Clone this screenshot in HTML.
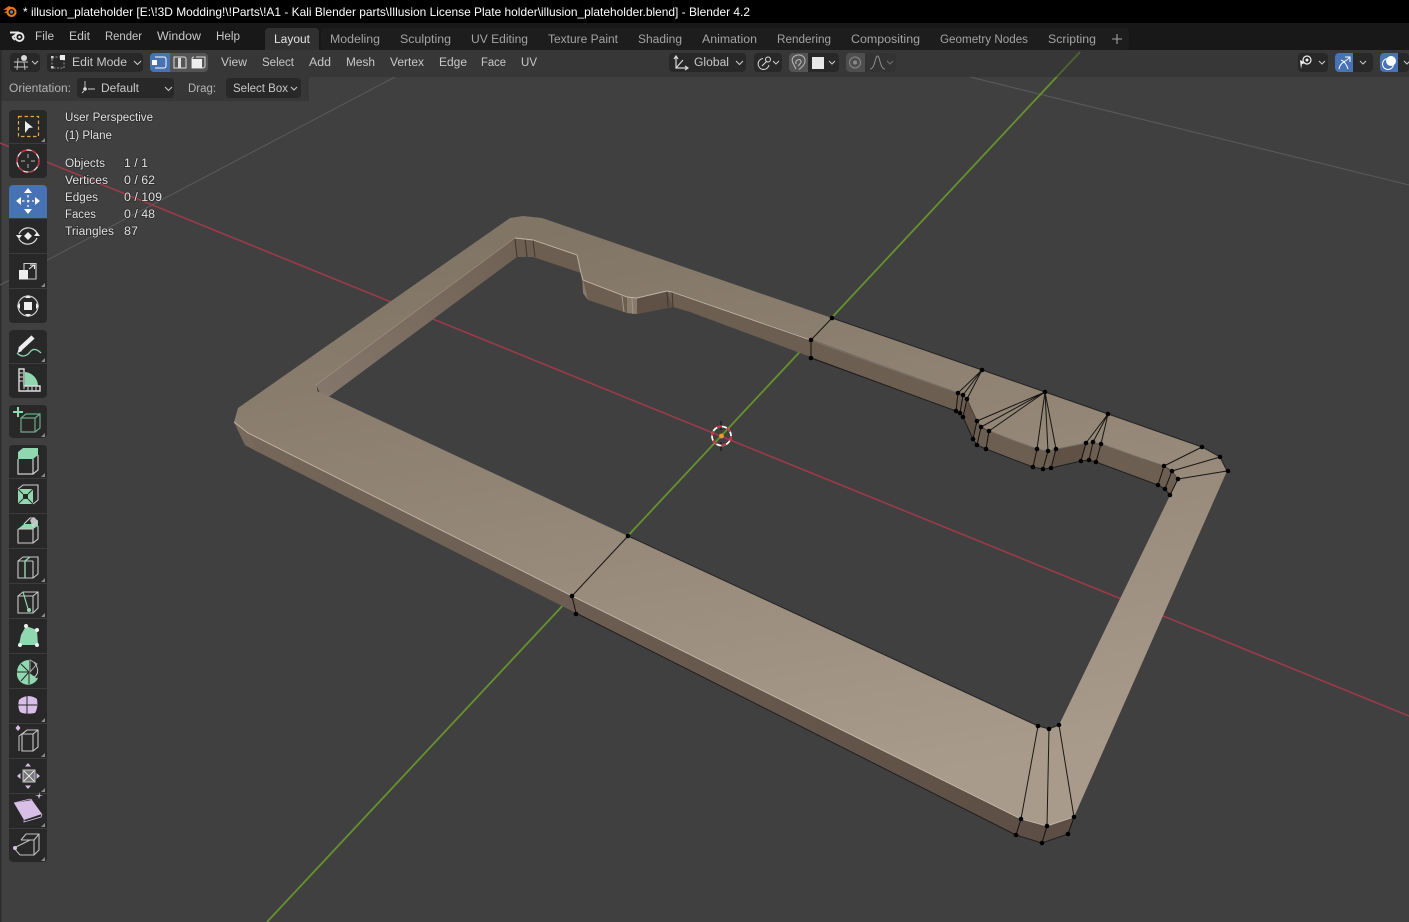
<!DOCTYPE html>
<html><head><meta charset="utf-8"><title>illusion_plateholder - Blender 4.2</title>
<style>
html,body{margin:0;padding:0;background:#404040;width:1409px;height:922px;overflow:hidden}
svg{display:block}
text{font-family:"Liberation Sans",sans-serif;font-size:11.5px;fill:#c8c8c8}
.t{fill:#a3a3a3}
.o{fill:#e2e2e2;paint-order:stroke;stroke:#1c1c1c;stroke-width:1.6px;stroke-opacity:.55}
.b{fill:#282828}
.ch{fill:none;stroke:#c8c8c8;stroke-width:1.1}
.w{fill:none;stroke:#d8d8d8;stroke-width:1.2}
.m{fill:#8fd8b0}
.p{fill:#d8bfe8}
.e{stroke:#0a0a0a;stroke-width:1;fill:none;opacity:.9}
.sep{fill:#3c3c3c}
.tri{fill:#8a8a8a}
</style></head><body>
<svg width="1409" height="922" viewBox="0 0 1409 922" xmlns="http://www.w3.org/2000/svg">
<defs>
<linearGradient id="top" gradientUnits="userSpaceOnUse" x1="620" y1="220" x2="720" y2="810"><stop offset="0" stop-color="#817566"/><stop offset="1" stop-color="#a99b8b"/></linearGradient>
<linearGradient id="wall" gradientUnits="userSpaceOnUse" x1="240" y1="440" x2="1060" y2="840"><stop offset="0" stop-color="#75675a"/><stop offset="1" stop-color="#5c4e44"/></linearGradient>
<linearGradient id="lw" gradientUnits="userSpaceOnUse" x1="320" y1="390" x2="515" y2="245"><stop offset="0" stop-color="#84766a"/><stop offset="1" stop-color="#6f6154"/></linearGradient>
</defs>
<rect width="1409" height="922" fill="#404040"/>
<rect x="0" y="50" width="1.5" height="872" fill="#2c2c2c"/>

<!-- grid and axes -->
<g fill="none">
<line x1="0" y1="285" x2="395" y2="77" stroke="#5a5a5a" stroke-width="1"/>
<line x1="970" y1="77" x2="1409" y2="185" stroke="#5a5a5a" stroke-width="1"/>
<line x1="0" y1="143" x2="1409" y2="716" stroke="#a03a4a" stroke-width="1.500"/>
<line x1="267" y1="922" x2="1080" y2="52" stroke="#66922e" stroke-width="1.800"/>
</g>

<!-- inner walls -->
<path fill="#6c5e51" d="M515,238 L533,240 L577,255 L581,273 L583,280 L627,297 L637,298 L667,291 L672,292 L958,393 L963,395 L967,399 L977,421 L981,427 L989,431 L1037,449 L1048,451 L1056,449 L1086,443 L1093,442 L1101,444 L1164,466 L1172,471 L1178,479 L1170,495 L1165,489 L1158,485 L1096,462 L1089,460 L1081,461 L1051,468 L1043,469 L1033,467 L986,449 L977,445 L973,439 L963,417 L960,413 L956,411 L690,312 L673,307 L637,314 L627,313 L588,300 L583,293 L581,273 L533,257 L517,257 Z"/>
<path fill="url(#lw)" d="M316,385 L515,238 L517,257 L327,398 L320,393 Z"/>
<path fill="#5f5146" d="M637,298 L667,291 L673,307 L637,314 Z M1056,449 L1086,443 L1081,461 L1051,468 Z M967,399 L977,421 L973,439 L963,417 Z"/>
<path fill="#8a7c6d" d="M627,297 L637,298 L637,314 L627,313 Z M583,280 L588,300 L583,293 Z"/>
<path stroke="#3e3630" stroke-width="1" fill="none" d="M515,239 L517,257 M525,238 L527,257 M533,240 L535,257 M667,291 L668,307 M672,291 L673,307"/>
<path stroke="#a3968a" stroke-width="1" fill="none" d="M622,296 L624,312 M632,298 L633,314"/>
<!-- outer walls -->
<path fill="url(#wall)" d="M234,422 L248,433 L572,596 L1021,819 L1047,826 L1074,817 L1068,834 L1042,843 L1016,835 L576,613 L258,452 L245,445 Z"/>
<path fill="#77695c" d="M234,422 L248,433 L258,452 L245,445 Z"/>
<!-- top face -->
<path fill="url(#top)" fill-rule="evenodd" d="M238,408 L510,218 L523,216 L542,218 L832,318 L982,370 L1045,392 L1108,414 L1202,447 L1220,457 L1227,471 L1074,817 L1047,826 L1021,819 L572,596 L248,433 L234,422 Z
M316,385 L515,238 L533,240 L577,255 L581,273 L583,280 L627,297 L637,298 L667,291 L672,292 L810,340 L958,393 L963,395 L967,399 L977,421 L981,427 L989,431 L1037,449 L1048,451 L1056,449 L1086,443 L1093,442 L1101,444 L1164,466 L1172,471 L1178,479 L1059,725 L1049,729 L1038,726 L628,536 L330,397 L317,391 Z"/>
<!-- highlights -->
<g fill="none" stroke="#d9cfc0" stroke-width=".9" opacity=".75">
<path d="M234,422 L248,433 L572,596 L1021,819 L1047,826 L1074,817"/>
<path d="M515,238 L533,240 L577,255 L581,273 L583,280 L627,297 L637,298 L667,291 L672,292 L810,340 L958,393"/>
<path d="M989,431 L1037,449 L1048,451 L1056,449 L1086,443 L1093,442 L1101,444 L1164,466"/>
</g>
<path d="M317,391 L316,385 L515,238" fill="none" stroke="#d9cfc0" stroke-width=".7" opacity=".35"/>
<g fill="none" stroke="#151515" stroke-width="1" opacity=".8">
<path d="M576,613 L1016,835 L1042,843 L1068,834"/>
<path d="M628,536 L1038,726 L1049,729 L1059,725"/>
<path d="M832,318 L982,370 L1045,392 L1108,414 L1202,447 L1220,457 L1227,471"/>
<path d="M811,358 L956,411 L960,413 L963,417 L973,439 L977,445 L986,449 L1033,467 L1043,469 L1051,468 L1081,461 L1089,460 L1096,462 L1158,485 L1165,489 L1170,495"/>
<path d="M811,340 L958,393 L963,395 L967,399 L977,421 L981,427 L989,431 L1037,449 L1048,451 L1056,449 L1086,443 L1093,442 L1101,444 L1164,466 L1172,471 L1178,479" opacity=".55"/>
</g>
<!-- edges -->
<g class="e">
<path d="M572,596 L628,536 M572,596 L576,613 M811,340 L832,318 M811,340 L811,358"/>
<path d="M982,370 L958,393 M982,370 L963,395 M982,370 L967,399"/>
<path d="M1045,392 L977,421 M1045,392 L981,427 M1045,392 L989,431 M1045,392 L1037,449 M1045,392 L1048,451 M1045,392 L1056,449"/>
<path d="M1108,414 L1086,443 M1108,414 L1093,442 M1108,414 L1101,444"/>
<path d="M1202,447 L1164,466 M1220,457 L1172,471 M1227,471 L1178,479"/>
<path d="M958,393 L956,411 M963,395 L960,413 M967,399 L963,417 M977,421 L973,439 M981,427 L977,445 M989,431 L986,449 M1037,449 L1033,467 M1048,451 L1043,469 M1056,449 L1051,468 M1086,443 L1081,461 M1093,442 L1089,460 M1101,444 L1096,462 M1164,466 L1158,485 M1172,471 L1165,489 M1178,479 L1170,495"/>
<path d="M1038,726 L1021,819 M1049,729 L1047,826 M1059,725 L1074,817 M1021,819 L1016,835 M1047,826 L1042,843 M1074,817 L1068,834"/>
</g>
<!-- vertices -->
<g fill="#000">
<circle cx="628" cy="536" r="2.300"/><circle cx="572" cy="596" r="2.300"/><circle cx="576" cy="614" r="2.300"/><circle cx="832" cy="318" r="2.300"/><circle cx="811" cy="340" r="2.300"/><circle cx="811" cy="358" r="2.300"/>
<circle cx="982" cy="370" r="2.300"/><circle cx="1045" cy="392" r="2.300"/><circle cx="1108" cy="414" r="2.300"/><circle cx="1202" cy="447" r="2.300"/><circle cx="1220" cy="457" r="2.300"/><circle cx="1228" cy="471" r="2.300"/>
<circle cx="958" cy="393" r="2.300"/><circle cx="963" cy="395" r="2.300"/><circle cx="967" cy="399" r="2.300"/><circle cx="977" cy="421" r="2.300"/><circle cx="981" cy="427" r="2.300"/><circle cx="989" cy="431" r="2.300"/><circle cx="1037" cy="449" r="2.300"/><circle cx="1048" cy="451" r="2.300"/><circle cx="1056" cy="449" r="2.300"/><circle cx="1086" cy="443" r="2.300"/><circle cx="1093" cy="442" r="2.300"/><circle cx="1101" cy="444" r="2.300"/><circle cx="1164" cy="466" r="2.300"/><circle cx="1172" cy="471" r="2.300"/><circle cx="1178" cy="479" r="2.300"/>
<circle cx="956" cy="411" r="2.300"/><circle cx="960" cy="413" r="2.300"/><circle cx="963" cy="417" r="2.300"/><circle cx="973" cy="439" r="2.300"/><circle cx="977" cy="445" r="2.300"/><circle cx="986" cy="449" r="2.300"/><circle cx="1033" cy="467" r="2.300"/><circle cx="1043" cy="469" r="2.300"/><circle cx="1051" cy="468" r="2.300"/><circle cx="1081" cy="461" r="2.300"/><circle cx="1089" cy="460" r="2.300"/><circle cx="1096" cy="462" r="2.300"/><circle cx="1158" cy="485" r="2.300"/><circle cx="1165" cy="489" r="2.300"/><circle cx="1170" cy="495" r="2.300"/>
<circle cx="1038" cy="726" r="2.300"/><circle cx="1049" cy="729" r="2.300"/><circle cx="1059" cy="725" r="2.300"/><circle cx="1021" cy="819" r="2.300"/><circle cx="1047" cy="826" r="2.300"/><circle cx="1074" cy="817" r="2.300"/><circle cx="1016" cy="835" r="2.300"/><circle cx="1042" cy="843" r="2.300"/><circle cx="1068" cy="834" r="2.300"/>
</g>
<!-- 3D cursor -->
<g fill="none">
<path d="M721,421 V430 M721,442 V451" stroke="#111" stroke-width="1"/>
<circle cx="721.500" cy="436" r="9.500" stroke="#fff" stroke-width="1.700"/>
<circle cx="721.500" cy="436" r="9.500" stroke="#d0303c" stroke-width="1.800" stroke-dasharray="5 5"/>
<circle cx="721.500" cy="436" r="2.400" fill="#f09a20"/>
</g>

<!-- header overlays -->
<rect x="0" y="50" width="1409" height="27" fill="#2c2c2c" opacity=".42"/>
<rect x="0" y="77" width="309" height="24" fill="#2c2c2c" opacity=".42"/>
<!-- title bar -->
<rect width="1409" height="23" fill="#000"/>
<rect y="23" width="1409" height="27" fill="#181818"/>
<g>
<circle cx="11.500" cy="12" r="4" fill="none" stroke="#ea7600" stroke-width="2.200"/>
<path d="M3,10 L10,9.500 L11,7 L9,6 Z M4,13 L8,10 L8,13 Z" fill="#ea7600"/><circle cx="11.500" cy="12" r="1.700" fill="#5a7fb0"/>
</g>
<text x="23" y="16" textLength="727" lengthAdjust="spacingAndGlyphs" style="fill:#fff;font-size:12px">* illusion_plateholder [E:\!3D Modding!\!Parts\!A1 - Kali Blender parts\Illusion License Plate holder\illusion_plateholder.blend] - Blender 4.2</text>
<!-- blender logo -->
<g fill="none" stroke="#e6e6e6">
<circle cx="19.500" cy="37" r="4" stroke-width="1.900"/>
<path d="M10,32.500 H19 M12,37.500 L18,33 M12.500,37.500 L15,40" stroke-width="1.900"/>
</g>
<circle cx="19.500" cy="37" r="1.300" fill="#e6e6e6"/>
<text x="35" y="40" textLength="19" lengthAdjust="spacingAndGlyphs">File</text>
<text x="69" y="40" textLength="21" lengthAdjust="spacingAndGlyphs">Edit</text>
<text x="105" y="40" textLength="37" lengthAdjust="spacingAndGlyphs">Render</text>
<text x="157" y="40" textLength="44" lengthAdjust="spacingAndGlyphs">Window</text>
<text x="216" y="40" textLength="24" lengthAdjust="spacingAndGlyphs">Help</text>
<!-- tabs -->
<rect x="321" y="28" width="808" height="22" rx="4" fill="#1d1d1d"/>
<path d="M265,50 V32 a4,4 0 0 1 4,-4 H315 a4,4 0 0 1 4,4 V50 Z" fill="#303030"/>
<text x="274" y="43" textLength="36" lengthAdjust="spacingAndGlyphs" style="fill:#e2e2e2">Layout</text>
<text class="t" x="330" y="43" textLength="50" lengthAdjust="spacingAndGlyphs">Modeling</text>
<text class="t" x="400" y="43" textLength="51" lengthAdjust="spacingAndGlyphs">Sculpting</text>
<text class="t" x="471" y="43" textLength="57" lengthAdjust="spacingAndGlyphs">UV Editing</text>
<text class="t" x="548" y="43" textLength="70" lengthAdjust="spacingAndGlyphs">Texture Paint</text>
<text class="t" x="638" y="43" textLength="44" lengthAdjust="spacingAndGlyphs">Shading</text>
<text class="t" x="702" y="43" textLength="55" lengthAdjust="spacingAndGlyphs">Animation</text>
<text class="t" x="777" y="43" textLength="54" lengthAdjust="spacingAndGlyphs">Rendering</text>
<text class="t" x="851" y="43" textLength="69" lengthAdjust="spacingAndGlyphs">Compositing</text>
<text class="t" x="940" y="43" textLength="88" lengthAdjust="spacingAndGlyphs">Geometry Nodes</text>
<text class="t" x="1048" y="43" textLength="48" lengthAdjust="spacingAndGlyphs">Scripting</text>
<path d="M1117,34 V44 M1112,39 H1122" stroke="#a3a3a3" stroke-width="1.100"/>

<!-- header row 1 -->
<rect class="b" x="10" y="53" width="30" height="19" rx="4"/>
<path d="M14,62 H28 M14,67 H28 M18,58 L17,70 M24,62 L25,70" stroke="#c8c8c8" stroke-width=".9" fill="none"/>
<circle cx="24" cy="58" r="3" fill="#d8d8d8"/>
<path d="M32,61 l3,3 l3,-3" class="ch"/>
<rect class="b" x="47" y="53" width="96" height="19" rx="4"/>
<path d="M52,57 H64 V68 H52 Z" fill="none" stroke="#b0b0b0" stroke-width=".8" stroke-dasharray="2 1.500"/>
<rect x="60" y="55" width="5" height="5" fill="#ededed"/><rect x="51" y="56" width="2.500" height="2.500" fill="#ccc"/><rect x="51" y="66" width="2.500" height="2.500" fill="#ccc"/>
<text x="72" y="66" textLength="55" lengthAdjust="spacingAndGlyphs">Edit Mode</text>
<path d="M134,61 l3.500,3.500 l3.500,-3.500" class="ch"/>
<rect x="150" y="53" width="19" height="19" rx="4" fill="#4772b3"/>
<rect x="165" y="53" width="5" height="19" fill="#4772b3"/>
<rect x="170" y="53" width="19" height="19" fill="#545454"/>
<path d="M189,53 H204 a4,4 0 0 1 4,4 V68 a4,4 0 0 1 -4,4 H189 Z" fill="#545454"/>
<path d="M155,57 H164 a2,2 0 0 1 2,2 V66 a2,2 0 0 1 -2,2 H155" fill="none" stroke="#fff" stroke-width="1"/>
<rect x="152" y="60" width="5" height="5" fill="#fff"/>
<path d="M174,57 H184 a2,2 0 0 1 2,2 V68 H174 Z" fill="none" stroke="#ddd" stroke-width="1"/><rect x="178" y="58" width="3" height="10" fill="#ddd"/>
<path d="M196,57 H205 V66 a2,2 0 0 1 -2,2 H192 V59 a2,2 0 0 1 2,-2" fill="none" stroke="#ddd" stroke-width="1"/><rect x="192" y="59" width="10" height="9" fill="#eee"/>
<text x="221" y="66" textLength="26" lengthAdjust="spacingAndGlyphs">View</text>
<text x="262" y="66" textLength="32" lengthAdjust="spacingAndGlyphs">Select</text>
<text x="309" y="66" textLength="22" lengthAdjust="spacingAndGlyphs">Add</text>
<text x="346" y="66" textLength="29" lengthAdjust="spacingAndGlyphs">Mesh</text>
<text x="390" y="66" textLength="34" lengthAdjust="spacingAndGlyphs">Vertex</text>
<text x="439" y="66" textLength="28" lengthAdjust="spacingAndGlyphs">Edge</text>
<text x="481" y="66" textLength="25" lengthAdjust="spacingAndGlyphs">Face</text>
<text x="521" y="66" textLength="16" lengthAdjust="spacingAndGlyphs">UV</text>

<rect class="b" x="669" y="53" width="77" height="19" rx="4"/>
<path d="M676,57 V68 H687 M676,68 L683,60" class="w" stroke-width="1"/><path d="M674,59 l2,-3 l2,3 M685,66 l3,2 l-3,2" class="w" stroke-width=".9"/>
<text x="694" y="66" textLength="35" lengthAdjust="spacingAndGlyphs">Global</text>
<path d="M736,61 l3.500,3.500 l3.500,-3.500" class="ch"/>
<rect class="b" x="754" y="53" width="28" height="19" rx="4"/>
<path d="M763,58.500 A5.500,5.500 0 1 0 769,65 M767,61 L762,66" fill="none" stroke="#ddd" stroke-width="1"/><circle cx="768" cy="59.500" r="2.500" fill="none" stroke="#ddd"/>
<path d="M773,61 l3,3 l3,-3" class="ch"/>
<rect class="b" x="789" y="53" width="50" height="19" rx="4"/>
<path d="M789,57 a4,4 0 0 1 4,-4 H808 V72 H793 a4,4 0 0 1 -4,-4 Z" fill="#545454"/>
<path d="M796,69 L792.500,62 C790,54 804,52 805,60 C805.500,64 802,67 799,69.500 M796,64 C795,60 800,58 801,61 C801.500,62.500 799,65 798,66" fill="none" stroke="#b4b4b4" stroke-width="1.100"/>
<rect x="812" y="57" width="12" height="12" fill="#e8e8e8"/>
<path d="M829,61 l3,3 l3,-3" class="ch"/>
<rect x="846" y="53" width="50" height="19" rx="4" fill="#333"/>
<path d="M846,57 a4,4 0 0 1 4,-4 H865 V72 H850 a4,4 0 0 1 -4,-4 Z" fill="#4e4e4e"/>
<circle cx="855" cy="62.500" r="5.500" fill="none" stroke="#8a8a8a"/><circle cx="855" cy="62.500" r="2" fill="#8a8a8a"/>
<path d="M870,69 C875,69 875,56 877.500,56 C880,56 880,69 885,69" fill="none" stroke="#8e8e8e"/>
<path d="M887,61 l3,3 l3,-3" class="ch" opacity=".4"/>

<rect class="b" x="1298" y="53" width="30" height="19" rx="4"/>
<circle cx="1307" cy="60" r="4" fill="none" stroke="#eee" stroke-width="1.200"/><circle cx="1307" cy="60" r="1.500" fill="#eee"/>
<path d="M1300,60 L1306,63 L1302,64 L1301,69 Z" fill="#eee"/>
<path d="M1319,61 l3,3 l3,-3" class="ch"/>
<rect class="b" x="1335" y="53" width="38" height="19" rx="4"/>
<path d="M1335,57 a4,4 0 0 1 4,-4 H1353 V72 H1339 a4,4 0 0 1 -4,-4 Z" fill="#4772b3"/>
<path d="M1339,69 C1340,62 1346,62 1350,57 M1345,57 H1350 V62 M1341,60 C1344,61 1347,65 1348,69" fill="none" stroke="#fff" stroke-width="1"/>
<path d="M1360,61 l3,3 l3,-3" class="ch"/>
<rect class="b" x="1380" y="53" width="29" height="19" rx="4"/>
<path d="M1380,57 a4,4 0 0 1 4,-4 H1398 V72 H1384 a4,4 0 0 1 -4,-4 Z" fill="#4772b3"/>
<circle cx="1388" cy="64" r="5.500" fill="none" stroke="#fff"/><circle cx="1391" cy="61" r="5" fill="#fff"/>
<path d="M1404,61 l3,3 l3,-3" class="ch"/>

<!-- tool settings -->
<text x="9" y="92" textLength="62" lengthAdjust="spacingAndGlyphs" style="fill:#b4b4b4">Orientation:</text>
<rect class="b" x="77" y="78" width="97" height="20" rx="4"/>
<path d="M85,81 V88 M82,93 l2,-2 M88,89 H95" fill="none" stroke="#ccc" stroke-width=".9"/><circle cx="85" cy="89" r="1.800" fill="#ddd"/>
<text x="101" y="92" textLength="38" lengthAdjust="spacingAndGlyphs">Default</text>
<path d="M165,87 l3.500,3.500 l3.500,-3.500" class="ch"/>
<text x="188" y="92" textLength="28" lengthAdjust="spacingAndGlyphs" style="fill:#b4b4b4">Drag:</text>
<rect class="b" x="226" y="78" width="75" height="20" rx="4"/>
<text x="233" y="92" textLength="55" lengthAdjust="spacingAndGlyphs">Select Box</text>
<path d="M291,87 l3,3 l3,-3" class="ch"/>

<!-- overlay text -->
<text class="o" x="65" y="121" textLength="88" lengthAdjust="spacingAndGlyphs">User Perspective</text>
<text class="o" x="65" y="139" textLength="47" lengthAdjust="spacingAndGlyphs">(1) Plane</text>
<text class="o" x="65" y="167" textLength="40" lengthAdjust="spacingAndGlyphs">Objects</text>
<text class="o" x="65" y="184" textLength="43" lengthAdjust="spacingAndGlyphs">Vertices</text>
<text class="o" x="65" y="201" textLength="33" lengthAdjust="spacingAndGlyphs">Edges</text>
<text class="o" x="65" y="218" textLength="31" lengthAdjust="spacingAndGlyphs">Faces</text>
<text class="o" x="65" y="235" textLength="49" lengthAdjust="spacingAndGlyphs">Triangles</text>
<text class="o" x="124" y="167" textLength="24" lengthAdjust="spacingAndGlyphs">1 / 1</text>
<text class="o" x="124" y="184" textLength="31" lengthAdjust="spacingAndGlyphs">0 / 62</text>
<text class="o" x="124" y="201" textLength="38" lengthAdjust="spacingAndGlyphs">0 / 109</text>
<text class="o" x="124" y="218" textLength="31" lengthAdjust="spacingAndGlyphs">0 / 48</text>
<text class="o" x="124" y="235" textLength="14" lengthAdjust="spacingAndGlyphs">87</text>

<!-- toolbar backgrounds -->
<rect class="b" x="9" y="110" width="38" height="68" rx="4"/>
<rect class="b" x="9" y="185" width="38" height="138" rx="4"/>
<rect class="b" x="9" y="330" width="38" height="68" rx="4"/>
<rect class="b" x="9" y="405" width="38" height="33" rx="4"/>
<rect class="b" x="9" y="445" width="38" height="417" rx="4"/>
<path d="M9,189 a4,4 0 0 1 4,-4 H43 a4,4 0 0 1 4,4 V218 H9 Z" fill="#4772b3"/>
<g class="sep">
<rect x="9" y="143" width="38" height="1"/><rect x="9" y="218" width="38" height="1"/><rect x="9" y="253" width="38" height="1"/><rect x="9" y="288" width="38" height="1"/><rect x="9" y="363" width="38" height="1"/>
<rect x="9" y="478" width="38" height="1"/><rect x="9" y="513" width="38" height="1"/><rect x="9" y="548" width="38" height="1"/><rect x="9" y="583" width="38" height="1"/><rect x="9" y="618" width="38" height="1"/><rect x="9" y="653" width="38" height="1"/><rect x="9" y="688" width="38" height="1"/><rect x="9" y="723" width="38" height="1"/><rect x="9" y="758" width="38" height="1"/><rect x="9" y="793" width="38" height="1"/><rect x="9" y="828" width="38" height="1"/>
</g>
<g class="tri">
<path d="M45,138 v4 h-4 Z M45,283 v4 h-4 Z M45,358 v4 h-4 Z M45,433 v4 h-4 Z M45,473 v4 h-4 Z M45,578 v4 h-4 Z M45,613 v4 h-4 Z M45,718 v4 h-4 Z M45,753 v4 h-4 Z M45,788 v4 h-4 Z M45,823 v4 h-4 Z M45,857 v4 h-4 Z"/>
</g>
<!-- select box -->
<rect x="18.500" y="116.500" width="20" height="20" fill="none" stroke="#e0a84a" stroke-width="1.200" stroke-dasharray="3.500 2.500"/>
<path d="M25,121 L33,127.500 L29,128 L25,133 Z" fill="#eee"/>
<!-- cursor -->
<circle cx="28" cy="161" r="11" fill="none" stroke="#e8e8e8" stroke-width="1.300"/>
<circle cx="28" cy="161" r="11" fill="none" stroke="#c0303c" stroke-width="1.400" stroke-dasharray="6 5"/>
<path d="M28,154 V158 M28,164 V168 M21,161 H25 M31,161 H35" stroke="#999" stroke-width="1.200"/>
<!-- move -->
<g fill="#fff"><path d="M28,188 l4,5 h-8 Z M28,214 l4,-5 h-8 Z M16,201 l5,-4 v8 Z M40,201 l-5,-4 v8 Z"/></g>
<path d="M28,195 V207 M22,201 H34" stroke="#fff" stroke-width="1.300" stroke-dasharray="2.500 2.500"/>
<!-- rotate -->
<path d="M19,234 A10,10 0 0 1 37,233 M37,238 A10,10 0 0 1 19,239" fill="none" stroke="#ddd" stroke-width="1.200"/>
<path d="M16,235 h6 l-3,4 Z M40,236 h-6 l3,-4 Z M28,232 l4,4 l-4,4 l-4,-4 Z" fill="#eee"/>
<!-- scale -->
<path d="M24,270 V263.500 H36 V279 H28" fill="none" stroke="#ccc" stroke-width="1.100"/>
<rect x="19" y="270" width="9" height="9.500" fill="#eee"/>
<path d="M29,269 L34,265 M30,265 H34.500 V269" fill="none" stroke="#eee" stroke-width="1.100"/>
<!-- transform -->
<circle cx="28" cy="306" r="10" fill="none" stroke="#ccc" stroke-width="1.200"/>
<rect x="24" y="302" width="8" height="8" fill="#eee"/>
<path d="M28,295 l3,3 h-6 Z M28,317 l3,-3 h-6 Z M17,306 l3,-3 v6 Z M39,306 l-3,-3 v6 Z" fill="#eee"/>
<!-- annotate -->
<path d="M33,337 L20,349" stroke="#eee" stroke-width="4.500"/><path d="M17.500,353 L19,347 L22,351 Z" fill="#eee"/>
<path d="M17,353 C22,358 27,356 30,352 C33,348 37,349 41,353" fill="none" stroke="#8fd8b0" stroke-width="1.300"/>
<!-- measure -->
<path d="M25,372 A14,14 0 0 1 38,386 H25 Z" fill="#8fd8b0"/>
<path d="M19,369 H24 V386 H40 V391 H19 Z" fill="none" stroke="#ddd" stroke-width="1.400"/>
<path d="M19,373 H23 M19,377 H23 M19,381 H23 M24,389 V387 M28,391 V387 M32,391 V387 M36,391 V387" stroke="#ddd" stroke-width="1"/>
<!-- add cube -->
<path d="M18,407 V417 M13,412 H23" stroke="#8fd8b0" stroke-width="2"/>
<path d="M21,418 H35 V432 H21 Z M21,418 L26,414 H40 V428 L35,432 M35,418 L40,414" fill="none" stroke="#6da98a" stroke-width="1.200"/>
<!-- extrude -->
<path d="M18,452 L23,448 H38 V455 L33,459 H18 Z" class="m"/>
<path d="M18,459 V474 H33 V459 M33,474 L38,470 V455" fill="none" stroke="#d0d0d0" stroke-width="1.200"/>
<!-- inset -->
<path d="M18,489 H33 V504 H18 Z" class="m"/>
<rect x="23" y="494" width="5" height="5" fill="#282828"/>
<path d="M18,489 L23,494 M33,489 L28,494 M18,504 L23,499 M33,504 L28,499" stroke="#282828"/>
<path d="M18,489 L23,485 H38 V500 L33,504" fill="none" stroke="#d0d0d0" stroke-width="1.100"/>
<!-- bevel -->
<path d="M18,529 L24,524 H34 L38,520 V526 L33,529 Z" class="m"/>
<path d="M30,520 L34,517 L38,521 L33,528 Z" fill="#d0d0d0" opacity=".9"/>
<path d="M18,529 V543 H33 V529 H18 M33,543 L38,539 V526 M24,524 L30,518 H34" fill="none" stroke="#d0d0d0" stroke-width="1.100"/>
<!-- loop cut -->
<path d="M18,561 L23,557 H38 V574 L33,578 H18 Z M33,561 V578 M18,561 H33" fill="none" stroke="#c8c8c8" stroke-width="1.100"/>
<path d="M25,578 V561 L30,557" fill="none" stroke="#8fd8b0" stroke-width="1.400"/>
<!-- knife -->
<path d="M18,596 L23,592 H38 V608 L33,613 H18 Z M18,596 H33 V613 M33,596 L38,592" fill="none" stroke="#c8c8c8" stroke-width="1.100"/>
<path d="M23,592 L29,612" stroke="#8fd8b0" stroke-width="1.200"/><circle cx="29" cy="610" r="2" class="m"/>
<!-- poly build -->
<path d="M26,626 L37,630 L38,645 L19,645 L21,635 Z" class="m"/>
<g fill="#eee"><circle cx="26" cy="626" r="2"/><circle cx="37" cy="630" r="2"/><circle cx="37" cy="645" r="2"/><circle cx="20" cy="645" r="2"/></g>
<!-- spin -->
<path d="M29,672 V660 A12,12 0 0 0 17,672 A11,11 0 0 0 38,678 Z" class="m"/>
<path d="M29,672 L17,672 M29,672 L21,664 M29,672 L21,681 M29,672 L29,684 M29,672 L37,678" stroke="#282828" stroke-width="1"/>
<path d="M30,660 L30,672 L37,664 Z" fill="none" stroke="#aaa"/>
<path d="M34,662 C40,670 38,675 33,678" fill="none" stroke="#ccc"/>
<!-- smooth -->
<path d="M19,700 C24,695 32,695 37,699 C38,705 37,710 35,713 C30,714 23,714 20,712 C18,708 18,704 19,700 Z" class="p"/>
<path d="M18,705 H37 M27,696 V714" stroke="#282828"/>
<!-- edge slide -->
<path d="M18,725 l2.500,3 l-2.500,3 l-2.500,-3 Z" class="p"/>
<path d="M22,734 L27,730 H38 V747 L33,751 H22 Z M22,734 H33 V751 M33,734 L38,730" fill="none" stroke="#c8c8c8" stroke-width="1.100"/>
<path d="M26,731 L19,736 V751" fill="none" stroke="#c8c8c8"/>
<!-- shrink -->
<rect x="23" y="770" width="12" height="12" fill="#777" stroke="#ccc"/>
<path d="M24,771 L34,781 M34,771 L24,781" stroke="#e8e8e8"/>
<path d="M28,763 l3,3.500 h-6 Z M28,789 l3,-3.500 h-6 Z M17,776 l3.500,-3 v6 Z M40,776 l-3.500,-3 v6 Z" class="p"/>
<!-- shear -->
<path d="M14,803 L32,800 L42,814 L24,820 Z" class="p"/>
<path d="M32,800 L30,799 L14,803 M42,814 L41,817 L24,822 L24,820" fill="none" stroke="#d8bfe8" stroke-width=".8"/>
<path d="M39,795 l0,-3 l1,3 l3,0 l-3,1 l-1,3 l-1,-3 l-3,-1 Z" class="p"/>
<!-- rip -->
<path d="M21,840 L26,834 H39 V850 L34,855 H20 M21,840 H34 V855 M34,840 L39,834" fill="none" stroke="#c0c0c0" stroke-width="1.100"/>
<path d="M14,848 L30,840 M14,848 L20,855" stroke="#c0c0c0"/><circle cx="15" cy="848" r="2" class="p"/>
</svg>
</body></html>
